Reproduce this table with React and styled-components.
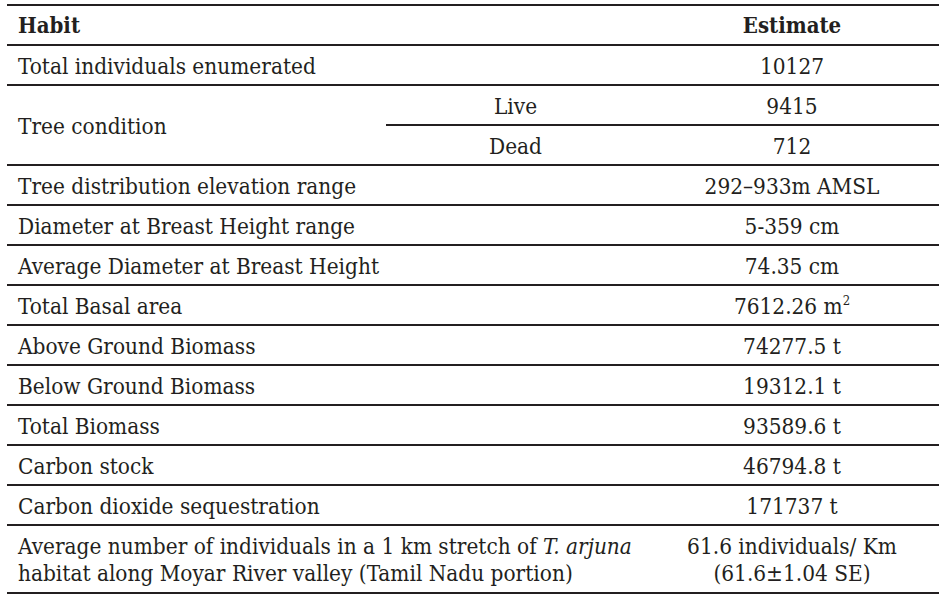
import React from "react";
import styled, { createGlobalStyle } from "styled-components";

const GlobalStyle = createGlobalStyle`
  html, body {
    margin: 0;
    padding: 0;
    background: #ffffff;
  }
  body {
    font-family: "DejaVu Serif Condensed", "DejaVu Serif", serif;
    color: #231f20;
  }
`;

const Page = styled.div`
  padding: 4px 9px 0 7px;
`;

const Table = styled.table`
  width: 932px;
  border-collapse: collapse;
  table-layout: fixed;
  border-top: 2px solid #231f20;
  font-size: 22.4px;
`;

const Row = styled.tr`
  height: 40px;
  border-bottom: 2px solid #231f20;
`;

const SubRow = styled.tr`
  height: 40px;
`;

const Head = styled.th`
  font-weight: bold;
  font-size: 22px;
  text-align: ${(p) => (p.$center ? "center" : "left")};
  padding: 0 11px;
  vertical-align: middle;
`;

const Cell = styled.td`
  text-align: ${(p) => (p.$center ? "center" : "left")};
  padding: ${(p) => (p.$tall ? "7px 11px 5px" : "2px 11px 0")};
  line-height: ${(p) => (p.$tall ? "27px" : "normal")};
  vertical-align: middle;
  white-space: nowrap;
  border-bottom: ${(p) => (p.$divide ? "2px solid #231f20" : "none")};
`;

const Sup = styled.sup`
  font-size: 13px;
  vertical-align: 9px;
  line-height: 0;
`;

const rows = [
  ["Tree distribution elevation range", "292–933m AMSL"],
  ["Diameter at Breast Height range", "5-359 cm"],
  ["Average Diameter at Breast Height", "74.35 cm"],
  ["Total Basal area", <>7612.26 m<Sup>2</Sup></>],
  ["Above Ground Biomass", "74277.5 t"],
  ["Below Ground Biomass", "19312.1 t"],
  ["Total Biomass", "93589.6 t"],
  ["Carbon stock", "46794.8 t"],
  ["Carbon dioxide sequestration", "171737 t"],
];

export default function App() {
  return (
    <Page>
      <GlobalStyle />
      <Table>
        <colgroup>
          <col style={{ width: 379 }} />
          <col style={{ width: 259 }} />
          <col style={{ width: 294 }} />
        </colgroup>
        <thead>
          <Row>
            <Head colSpan={2}>Habit</Head>
            <Head $center>Estimate</Head>
          </Row>
        </thead>
        <tbody>
          <Row>
            <Cell colSpan={2}>Total individuals enumerated</Cell>
            <Cell $center>10127</Cell>
          </Row>
          <SubRow>
            <Cell rowSpan={2}>Tree condition</Cell>
            <Cell $center $divide>Live</Cell>
            <Cell $center $divide>9415</Cell>
          </SubRow>
          <Row>
            <Cell $center>Dead</Cell>
            <Cell $center>712</Cell>
          </Row>
          {rows.map(([label, value]) => (
            <Row key={label}>
              <Cell colSpan={2}>{label}</Cell>
              <Cell $center>{value}</Cell>
            </Row>
          ))}
          <Row>
            <Cell colSpan={2} $tall>
              Average number of individuals in a 1 km stretch of <i>T. arjuna</i>
              <br />
              habitat along Moyar River valley (Tamil Nadu portion)
            </Cell>
            <Cell $center $tall>
              61.6 individuals/ Km
              <br />
              (61.6±1.04 SE)
            </Cell>
          </Row>
        </tbody>
      </Table>
    </Page>
  );
}
